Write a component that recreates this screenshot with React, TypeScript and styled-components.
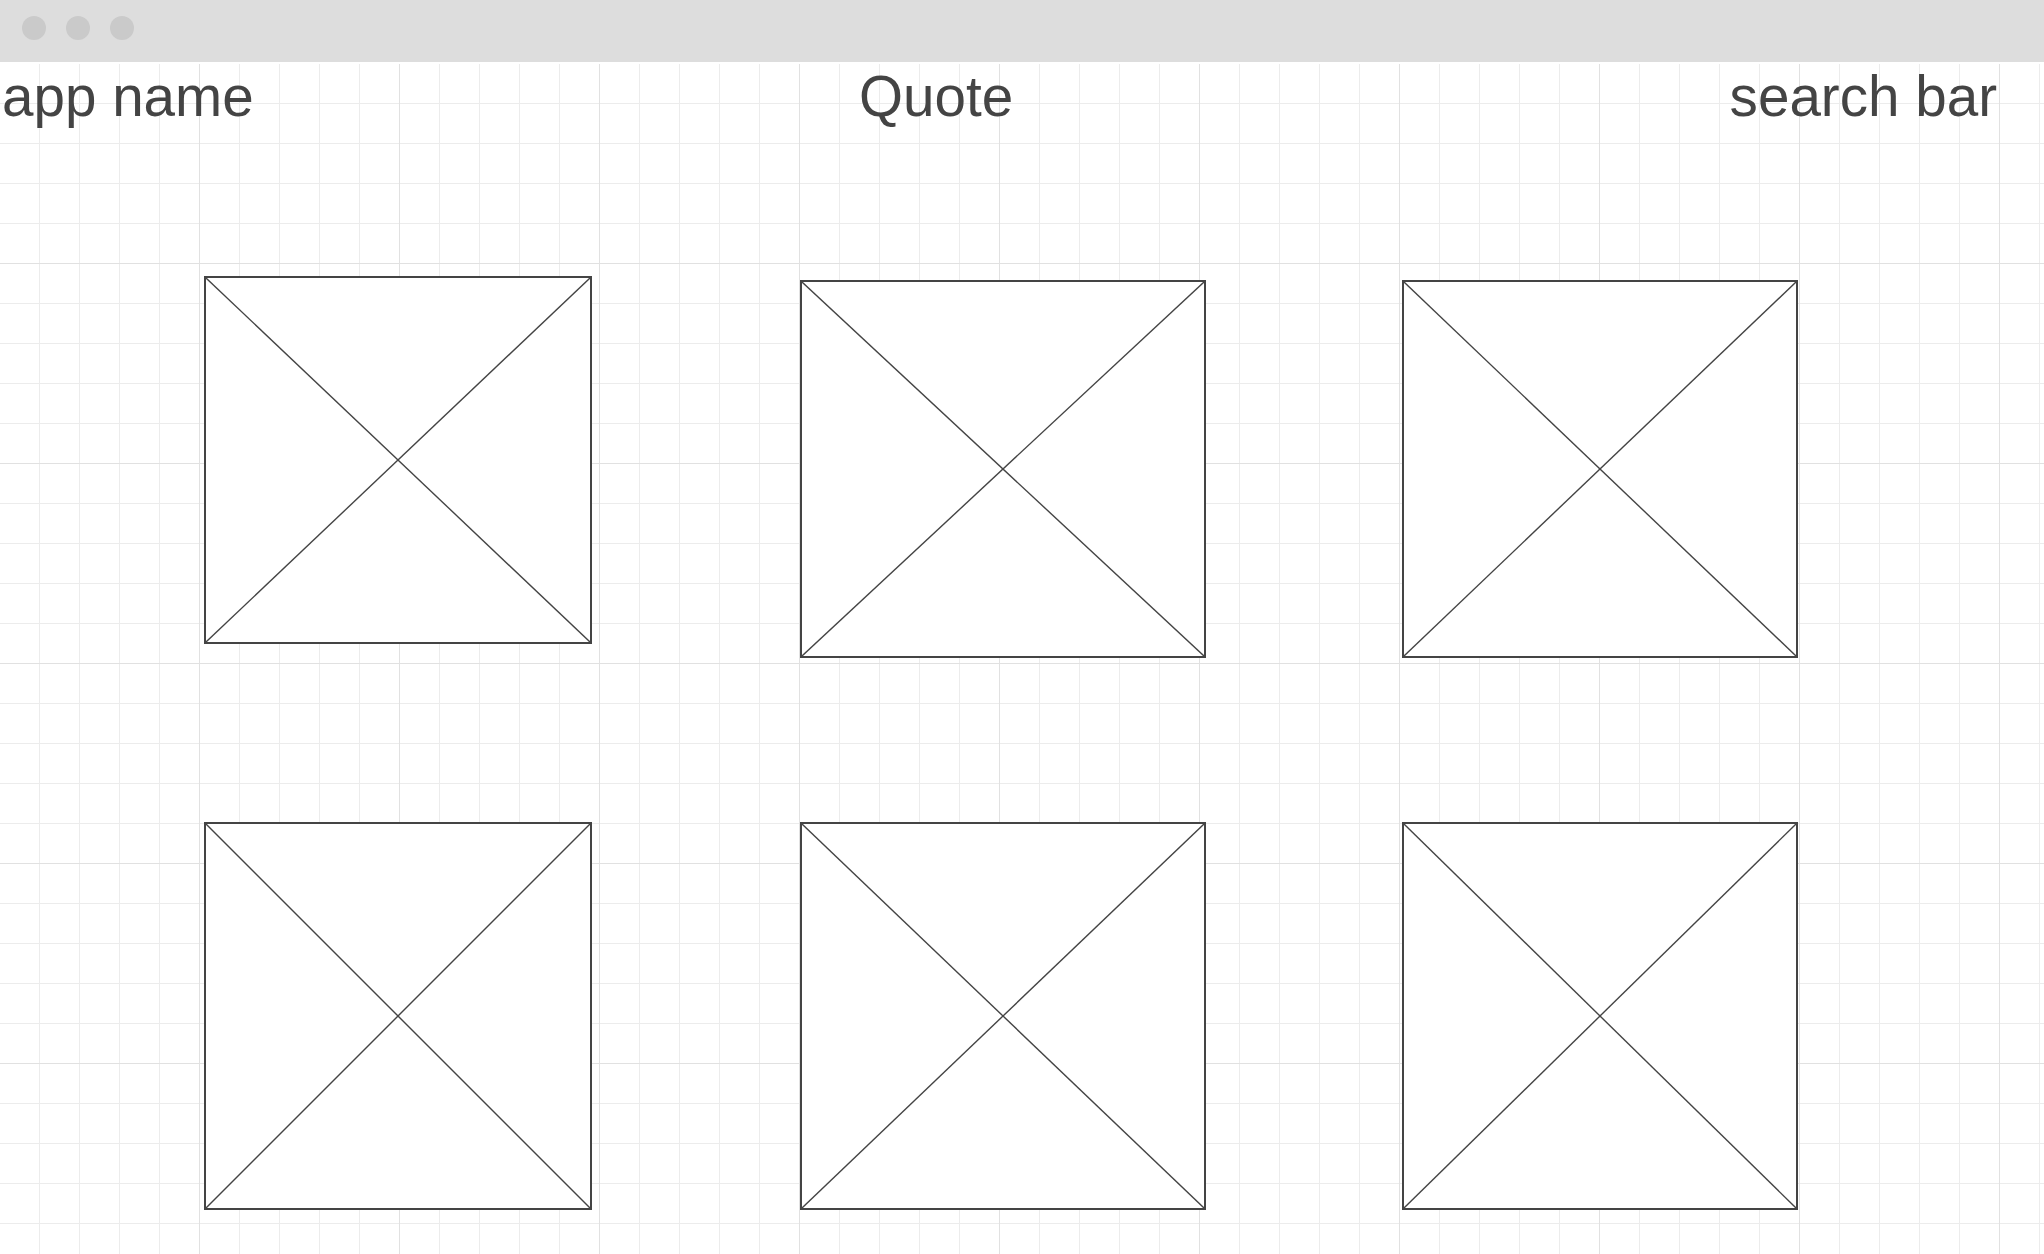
import React from "react";
import styled, { createGlobalStyle } from "styled-components";

const GlobalStyle = createGlobalStyle`
    html, body {
        margin: 0;
        padding: 0;
        background: #ffffff;
    }
    * {
        box-sizing: border-box;
    }
`;

const Window = styled.div`
    display: flex;
    flex-direction: column;
    min-height: 100vh;
    font-family: "Liberation Sans", Arial, sans-serif;
    color: #444444;
`;

const TitleBar = styled.div`
    display: flex;
    align-items: flex-start;
    gap: 20px;
    height: 64px;
    padding: 16px 0 0 22px;
    background: #dddddd;
    border-bottom: 2px solid #ffffff;
    flex-shrink: 0;
`;

const Dot = styled.span`
    width: 24px;
    height: 24px;
    border-radius: 50%;
    background: #cacaca;
`;

const Canvas = styled.main`
    flex: 1;
    background-color: #ffffff;
    background-image: linear-gradient(to right, #e1e1e1 1px, transparent 1px),
        linear-gradient(to bottom, #e1e1e1 1px, transparent 1px),
        linear-gradient(to right, #ececec 1px, transparent 1px),
        linear-gradient(to bottom, #ececec 1px, transparent 1px);
    background-size: 200px 200px, 200px 200px, 40px 40px, 40px 40px;
    background-position: 199px 199px, 199px 199px, 39px 39px, 39px 39px;
`;

const Header = styled.header`
    display: grid;
    grid-template-columns: 857px 1fr auto;
    padding: 1px 47px 0 2px;
    font-size: 56.6px;
    line-height: 64px;
`;

const Label = styled.div`
    white-space: nowrap;
`;

const Gallery = styled.section`
    display: grid;
    grid-template-columns: 596px 602px 1fr;
    row-gap: 164px;
    align-items: start;
    padding: 147px 0 0 204px;
`;

const Frame = styled.div<{ $w: number; $h: number; $top?: number }>`
    width: ${(p) => p.$w}px;
    height: ${(p) => p.$h}px;
    margin-top: ${(p) => p.$top ?? 0}px;
    border: 2px solid #444444;
    background: #ffffff;

    svg {
        display: block;
        width: 100%;
        height: 100%;
    }
`;

type Placeholder = { w: number; h: number; top?: number };

const placeholders: Placeholder[] = [
    { w: 388, h: 368 },
    { w: 406, h: 378, top: 4 },
    { w: 396, h: 378, top: 4 },
    { w: 388, h: 388 },
    { w: 406, h: 388 },
    { w: 396, h: 388 },
];

const ImageBox: React.FC<Placeholder> = ({ w, h, top }) => (
    <Frame $w={w} $h={h} $top={top}>
        <svg viewBox="0 0 100 100" preserveAspectRatio="none">
            <line x1="0" y1="0" x2="100" y2="100" stroke="#444444" strokeWidth="1.4" vectorEffect="non-scaling-stroke" />
            <line x1="100" y1="0" x2="0" y2="100" stroke="#444444" strokeWidth="1.4" vectorEffect="non-scaling-stroke" />
        </svg>
    </Frame>
);

const App: React.FC = () => {
    return (
        <Window>
            <GlobalStyle />
            <TitleBar>
                <Dot />
                <Dot />
                <Dot />
            </TitleBar>
            <Canvas>
                <Header>
                    <Label>app name</Label>
                    <Label>Quote</Label>
                    <Label>search bar</Label>
                </Header>
                <Gallery>
                    {placeholders.map((p, i) => (
                        <ImageBox key={i} {...p} />
                    ))}
                </Gallery>
            </Canvas>
        </Window>
    );
};

export default App;
